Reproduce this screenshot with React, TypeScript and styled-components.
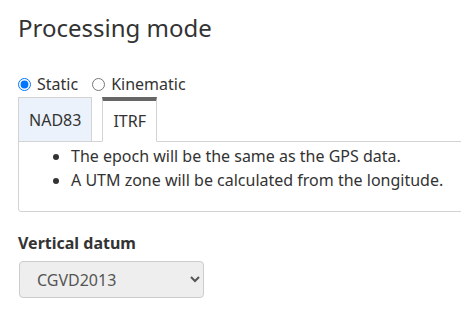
import * as React from 'react';
import styled, {createGlobalStyle} from 'styled-components';

const GlobalStyle = createGlobalStyle`
    body {
        margin: 0;
        font-family: "Noto Sans", "Open Sans", sans-serif;
        font-size: 16px;
        color: #333;
        background: #fff;
        overflow: hidden;
    }
`;

const Page = styled.div`
    padding: 12px 0 0 18px;
    width: 520px;
`;

const Title = styled.h2`
    margin: 0 0 30px;
    font-size: 24px;
    font-weight: 400;
    line-height: 32px;
`;

const RadioRow = styled.div`
    display: flex;
    align-items: center;
    gap: 14px;
    line-height: 20px;
    height: 20px;
`;

const RadioLabel = styled.label`
    display: flex;
    align-items: center;
    gap: 6px;
`;

const Radio = styled.input`
    margin: 0;
    width: 13px;
    height: 13px;
    accent-color: #0075ff;
`;

const Tabs = styled.div`
    display: flex;
    gap: 10px;
    margin-top: 3px;
    position: relative;
    z-index: 1;
`;

const Tab = styled.div<{active?: boolean}>`
    height: 45px;
    box-sizing: border-box;
    padding: 0 10px;
    display: flex;
    align-items: center;
    border: 1px solid #d3d3d3;
    border-top: ${p => (p.active ? '4px solid #666' : '1px solid #d3d3d3')};
    border-bottom: ${p => (p.active ? '1px solid #fff' : '1px solid #d3d3d3')};
    background: ${p => (p.active ? '#fff' : '#ecf2fb')};
    margin-bottom: -1px;
`;

const Panel = styled.div`
    border: 1px solid #d3d3d3;
    border-radius: 0 0 3px 3px;
    height: 71px;
    box-sizing: border-box;
    padding-top: 2px;
`;

const Notes = styled.ul`
    margin: 0;
    padding-left: 52px;
    line-height: 24px;
`;

const FieldLabel = styled.div`
    margin-top: 21px;
    font-weight: 700;
    line-height: 20px;
`;

const Select = styled.select`
    margin: 8px 0 0 1px;
    width: 185px;
    height: 37px;
    padding: 0 10px 0 13px;
    font-family: inherit;
    font-size: 16px;
    color: #555;
    background: #eee;
    border: 1px solid #ccc;
    border-radius: 4px;
`;

const App: React.FC = () => {
    return (
        <Page>
            <GlobalStyle />
            <Title>Processing mode</Title>
            <RadioRow>
                <RadioLabel>
                    <Radio type="radio" name="mode" defaultChecked />
                    Static
                </RadioLabel>
                <RadioLabel>
                    <Radio type="radio" name="mode" />
                    Kinematic
                </RadioLabel>
            </RadioRow>
            <Tabs>
                <Tab>NAD83</Tab>
                <Tab active>ITRF</Tab>
            </Tabs>
            <Panel>
                <Notes>
                    <li>The epoch will be the same as the GPS data.</li>
                    <li>A UTM zone will be calculated from the longitude.</li>
                </Notes>
            </Panel>
            <FieldLabel>Vertical datum</FieldLabel>
            <Select defaultValue="CGVD2013">
                <option>CGVD2013</option>
                <option>CGVD28</option>
            </Select>
        </Page>
    );
};

export default App;
